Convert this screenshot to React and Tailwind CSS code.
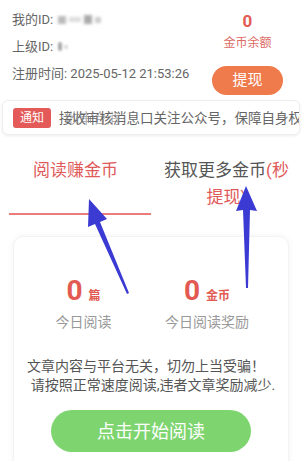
import React from "react";

const font = { fontFamily: "Roboto, 'Noto Sans CJK SC', sans-serif" };

function Arrows() {
  return (
    <svg className="pointer-events-none absolute left-0 top-0" width="302" height="461" viewBox="0 0 302 461">
      <polygon points="89,199 107,219 100,222 129,293 127,294 95,224 88,227" fill="#3b3bd4" />
      <polygon points="246,186 257,211 250,210 248,288 246,288 243,210 236,211" fill="#3b3bd4" />
    </svg>
  );
}

export default function App() {
  return (
    <div className="relative h-[461px] w-[302px] overflow-hidden bg-white" style={font}>
      {/* top info */}
      <div className="flex h-[98px] justify-between pl-[12px] pr-[19px] pt-[6px]">
        <div className="flex flex-col text-[13px] leading-[27px] text-[#666]">
          <div className="flex items-center">
            <span>我的ID:</span>
            <span className="ml-[5px] flex items-center gap-[3px] blur-[1.5px]">
              <span className="h-[8px] w-[8px] bg-[#bbb]" />
              <span className="h-[5px] w-[12px] bg-[#ddd]" />
              <span className="h-[9px] w-[8px] bg-[#aaa]" />
              <span className="h-[6px] w-[6px] bg-[#ccc]" />
            </span>
          </div>
          <div className="flex items-center">
            <span>上级ID:</span>
            <span className="ml-[5px] flex items-center gap-[2px] blur-[1px]">
              <span className="h-[9px] w-[4px] rounded-full bg-[#aaa]" />
              <span className="h-[4px] w-[4px] bg-[#ddd]" />
            </span>
          </div>
          <div>注册时间: 2025-05-12 21:53:26</div>
        </div>
        <div className="flex flex-col items-center">
          <div className="mt-[5px] text-[17px] font-bold leading-[20px] text-[#e25a52]">0</div>
          <div className="mt-[3px] text-[12px] leading-[18px] text-[#dc6a64]">金币余额</div>
          <button className="mt-[14px] flex h-[29px] w-[71px] items-center justify-center rounded-full bg-[#ef7a4b] text-[15px] text-white">
            提现
          </button>
        </div>
      </div>

      {/* notice */}
      <div className="mx-[2px] mt-[2px] flex h-[35px] items-center overflow-hidden rounded-[6px] border border-[#eeeeee] shadow-[0_1px_3px_rgba(0,0,0,0.08)]">
        <span className="ml-[10px] flex h-[20px] w-[38px] shrink-0 items-center justify-center rounded-[3px] bg-[#e35a58] text-[12px] text-white">
          通知
        </span>
        <div className="relative ml-[5px] h-[20px] flex-1 overflow-hidden whitespace-nowrap text-[13.5px] leading-[20px] text-[#666]">
          <span className="ml-[3px]">接收审核消息口关注公众号，保障自身权益</span>
          <span className="absolute left-[10px] top-0 text-[#777] opacity-60">收审合消</span>
        </div>
      </div>

      {/* tabs */}
      <div className="mt-[22px] grid grid-cols-2">
        <div className="flex flex-col items-center">
          <div className="text-[17px] leading-[27px] text-[#e05a5a]">阅读赚金币</div>
          <div className="mt-[29px] h-[2px] w-[142px] self-end bg-[#ec7b7b]" />
        </div>
        <div className="px-[6px] text-center text-[17px] leading-[27px] text-[#555]">
          获取更多金币<span className="text-[#e05a5a]">(秒提现)</span>
        </div>
      </div>

      {/* card */}
      <div className="mx-[13px] mt-[21px] rounded-[10px] border border-[#f3f3f3] bg-white pb-[20px] shadow-[0_0_6px_rgba(0,0,0,0.05)]">
        <div className="flex gap-[55px] pl-[42px] pt-[38px]">
          <div className="flex w-[55px] flex-col items-center">
            <div className="flex items-baseline gap-[6px] text-[#e25a52]">
              <span className="text-[28px] font-bold leading-[32px]">0</span>
              <span className="text-[12px] font-bold">篇</span>
            </div>
            <div className="mt-[5px] whitespace-nowrap text-[14px] text-[#999]">今日阅读</div>
          </div>
          <div className="flex w-[82px] flex-col items-center">
            <div className="flex items-baseline gap-[6px] text-[#e25a52]">
              <span className="text-[28px] font-bold leading-[32px]">0</span>
              <span className="text-[12px] font-bold">金币</span>
            </div>
            <div className="mt-[5px] whitespace-nowrap text-[14px] text-[#999]">今日阅读奖励</div>
          </div>
        </div>
        <div className="mt-[24px] flex flex-col items-center text-[14px] leading-[19px] text-[#555]">
          <div className="mr-[10px]">文章内容与平台无关，切勿上当受骗！</div>
          <div className="ml-[4px]">请按照正常速度阅读,违者文章奖励减少.</div>
        </div>
        <div className="mt-[15px] flex justify-center">
          <button className="flex h-[42px] w-[200px] items-center justify-center rounded-full bg-[#7ed56f] text-[18px] text-white">
            点击开始阅读
          </button>
        </div>
      </div>

      <Arrows />
    </div>
  );
}
